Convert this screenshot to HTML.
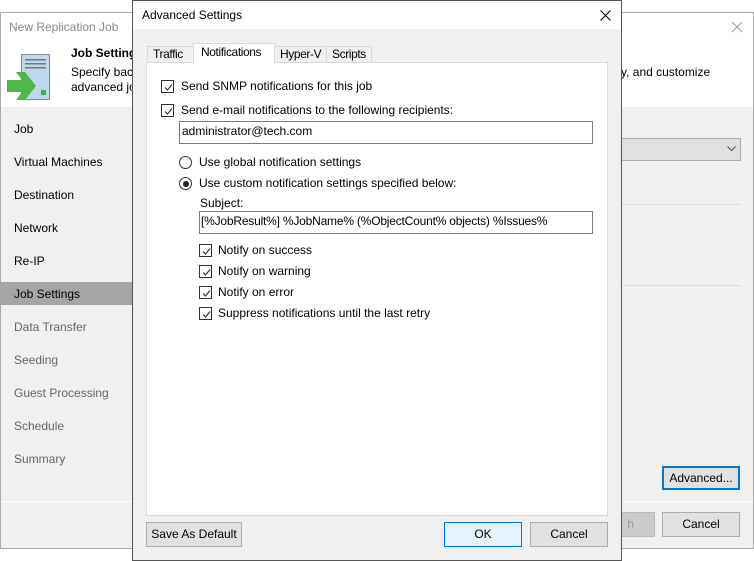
<!DOCTYPE html>
<html><head><meta charset="utf-8"><style>
*{box-sizing:border-box;margin:0;padding:0}
body{width:754px;height:561px;background:#fff;position:relative;overflow:hidden;font-family:"Segoe UI","Liberation Sans",sans-serif;font-size:12px;color:#000}
.a{position:absolute}
.t{position:absolute;white-space:nowrap;line-height:15px}
.cb{position:absolute;width:13px;height:13px;border:1px solid #333;background:#fff}
.cb svg{position:absolute;left:1px;top:1px}
.rb{position:absolute;width:13px;height:13px;border:1px solid #333;border-radius:50%;background:#fff}
.btn{position:absolute;height:25px;border:1px solid #adadad;background:#e1e1e1;text-align:center;line-height:23px}
.tab{letter-spacing:-0.4px}
</style></head><body>
<!-- background wizard -->
<div class="a" style="left:0;top:12px;width:754px;height:537px;border:1px solid #aaa;background:#f0f0f0"></div>
<div class="a" style="left:1px;top:13px;width:752px;height:94px;background:#fff"></div>
<div class="t" style="left:9px;top:20px;color:#888">New Replication Job</div>
<svg class="a" style="left:731px;top:21px" width="12" height="12"><path d="M1 1 L11 11 M11 1 L1 11" stroke="#999" stroke-width="1"/></svg>
<svg class="a" style="left:6px;top:54px" width="46" height="48" viewBox="0 0 46 48">
<rect x="15.5" y="0.5" width="28" height="45" fill="#bdd7ee" stroke="#888"/>
<rect x="19" y="5" width="21" height="1.5" fill="#777"/><rect x="19" y="9" width="21" height="1.5" fill="#777"/><rect x="19" y="13" width="21" height="1.5" fill="#777"/>
<rect x="35" y="36" width="5" height="5" fill="#3cb043"/>
<path d="M1 26 H16 L10 18 H19 L30 32 L19 46 H10 L16 38 H1 Z" fill="#4db848"/>
</svg>
<div class="t" style="left:71px;top:46px;font-weight:bold">Job Settings</div>
<div class="t" style="left:71px;top:65px">Specify bac</div>
<div class="t" style="left:71px;top:80px">advanced jo</div>
<div class="t" style="left:621px;top:65px">y, and customize</div>
<div class="a" style="left:0;top:282px;width:132px;height:23px;background:#a5a5a5"></div>
<div class="t" style="left:14px;top:122px">Job</div>
<div class="t" style="left:14px;top:155px">Virtual Machines</div>
<div class="t" style="left:14px;top:188px">Destination</div>
<div class="t" style="left:14px;top:221px">Network</div>
<div class="t" style="left:14px;top:254px">Re-IP</div>
<div class="t" style="left:14px;top:287px">Job Settings</div>
<div class="t" style="left:14px;top:320px;color:#666">Data Transfer</div>
<div class="t" style="left:14px;top:353px;color:#666">Seeding</div>
<div class="t" style="left:14px;top:386px;color:#666">Guest Processing</div>
<div class="t" style="left:14px;top:419px;color:#666">Schedule</div>
<div class="t" style="left:14px;top:452px;color:#666">Summary</div>
<div class="a" style="left:1px;top:501px;width:752px;height:1px;background:#fff"></div>
<div class="a" style="left:600px;top:138px;width:141px;height:23px;background:#e0e0e0;border:1px solid #aaa"></div>
<svg class="a" style="left:727px;top:146px" width="9" height="6"><path d="M0.5 0.5 L4.5 4.5 L8.5 0.5" fill="none" stroke="#555"/></svg>
<div class="a" style="left:600px;top:204px;width:141px;height:1px;background:#ddd"></div>
<div class="a" style="left:600px;top:285px;width:141px;height:1px;background:#ddd"></div>
<div class="btn" style="left:662px;top:466px;width:78px;height:24px;border:2px solid #0078d7;line-height:20px">Advanced...</div>
<div class="btn" style="left:600px;top:512px;width:55px;background:#ccc;border-color:#bbb;color:#999;text-align:right;padding-right:20px">h</div>
<div class="btn" style="left:662px;top:512px;width:78px">Cancel</div>
<!-- dialog -->
<div class="a" style="left:132px;top:0;width:490px;height:561px;border:1px solid #555;background:#f0f0f0"></div>
<div class="a" style="left:133px;top:1px;width:488px;height:28px;background:#fff"></div>
<div class="t" style="left:142px;top:8px">Advanced Settings</div>
<svg class="a" style="left:600px;top:10px" width="11" height="11"><path d="M0.5 0.5 L10.5 10.5 M10.5 0.5 L0.5 10.5" stroke="#000" stroke-width="1.1"/></svg>
<div class="a" style="left:146px;top:62px;width:462px;height:454px;background:#fff;border:1px solid #d9d9d9"></div>
<div class="a" style="left:147px;top:46px;width:47px;height:17px;background:#f0f0f0;border:1px solid #d9d9d9"></div>
<div class="t tab" style="left:153px;top:47px">Traffic</div>
<div class="a" style="left:193px;top:43px;width:82px;height:21px;background:#fff;border:1px solid #d9d9d9;border-bottom:none"></div>
<div class="t tab" style="left:201px;top:45px">Notifications</div>
<div class="a" style="left:274px;top:46px;width:53px;height:17px;background:#f0f0f0;border:1px solid #d9d9d9"></div>
<div class="t tab" style="left:280px;top:47px">Hyper-V</div>
<div class="a" style="left:326px;top:46px;width:46px;height:17px;background:#f0f0f0;border:1px solid #d9d9d9"></div>
<div class="t tab" style="left:332px;top:47px">Scripts</div>

<div class="cb" style="left:161px;top:80px"><svg width="11" height="11"><path d="M2 5.5 L4.5 8 L9 2.5" fill="none" stroke="#333" stroke-width="1.2"/></svg></div>
<div class="t" style="left:181px;top:79px">Send SNMP notifications for this job</div>
<div class="cb" style="left:161px;top:104px"><svg width="11" height="11"><path d="M2 5.5 L4.5 8 L9 2.5" fill="none" stroke="#333" stroke-width="1.2"/></svg></div>
<div class="t" style="left:181px;top:103px">Send e-mail notifications to the following recipients:</div>
<div class="a" style="left:179px;top:121px;width:414px;height:23px;border:1px solid #7a7a7a;background:#fff"></div>
<div class="t" style="left:182px;top:124px">administrator@tech.com</div>
<div class="rb" style="left:179px;top:156px"></div>
<div class="t" style="left:199px;top:155px">Use global notification settings</div>
<div class="rb" style="left:179px;top:177px"><div class="a" style="left:2.5px;top:2.5px;width:6px;height:6px;border-radius:50%;background:#222"></div></div>
<div class="t" style="left:199px;top:176px">Use custom notification settings specified below:</div>
<div class="t" style="left:200px;top:196px">Subject:</div>
<div class="a" style="left:199px;top:211px;width:394px;height:23px;border:1px solid #7a7a7a;background:#fff"></div>
<div class="t" style="left:201px;top:214px;letter-spacing:-0.2px">[%JobResult%] %JobName% (%ObjectCount% objects) %Issues%</div>
<div class="cb" style="left:199px;top:244px"><svg width="11" height="11"><path d="M2 5.5 L4.5 8 L9 2.5" fill="none" stroke="#333" stroke-width="1.2"/></svg></div>
<div class="t" style="left:218px;top:243px">Notify on success</div>
<div class="cb" style="left:199px;top:265px"><svg width="11" height="11"><path d="M2 5.5 L4.5 8 L9 2.5" fill="none" stroke="#333" stroke-width="1.2"/></svg></div>
<div class="t" style="left:218px;top:264px">Notify on warning</div>
<div class="cb" style="left:199px;top:286px"><svg width="11" height="11"><path d="M2 5.5 L4.5 8 L9 2.5" fill="none" stroke="#333" stroke-width="1.2"/></svg></div>
<div class="t" style="left:218px;top:285px">Notify on error</div>
<div class="cb" style="left:199px;top:307px"><svg width="11" height="11"><path d="M2 5.5 L4.5 8 L9 2.5" fill="none" stroke="#333" stroke-width="1.2"/></svg></div>
<div class="t" style="left:218px;top:306px">Suppress notifications until the last retry</div>

<div class="btn" style="left:146px;top:522px;width:96px">Save As Default</div>
<div class="btn" style="left:444px;top:522px;width:78px;background:#e5f1fb;border-color:#0078d7">OK</div>
<div class="btn" style="left:530px;top:522px;width:78px">Cancel</div>
</body></html>
